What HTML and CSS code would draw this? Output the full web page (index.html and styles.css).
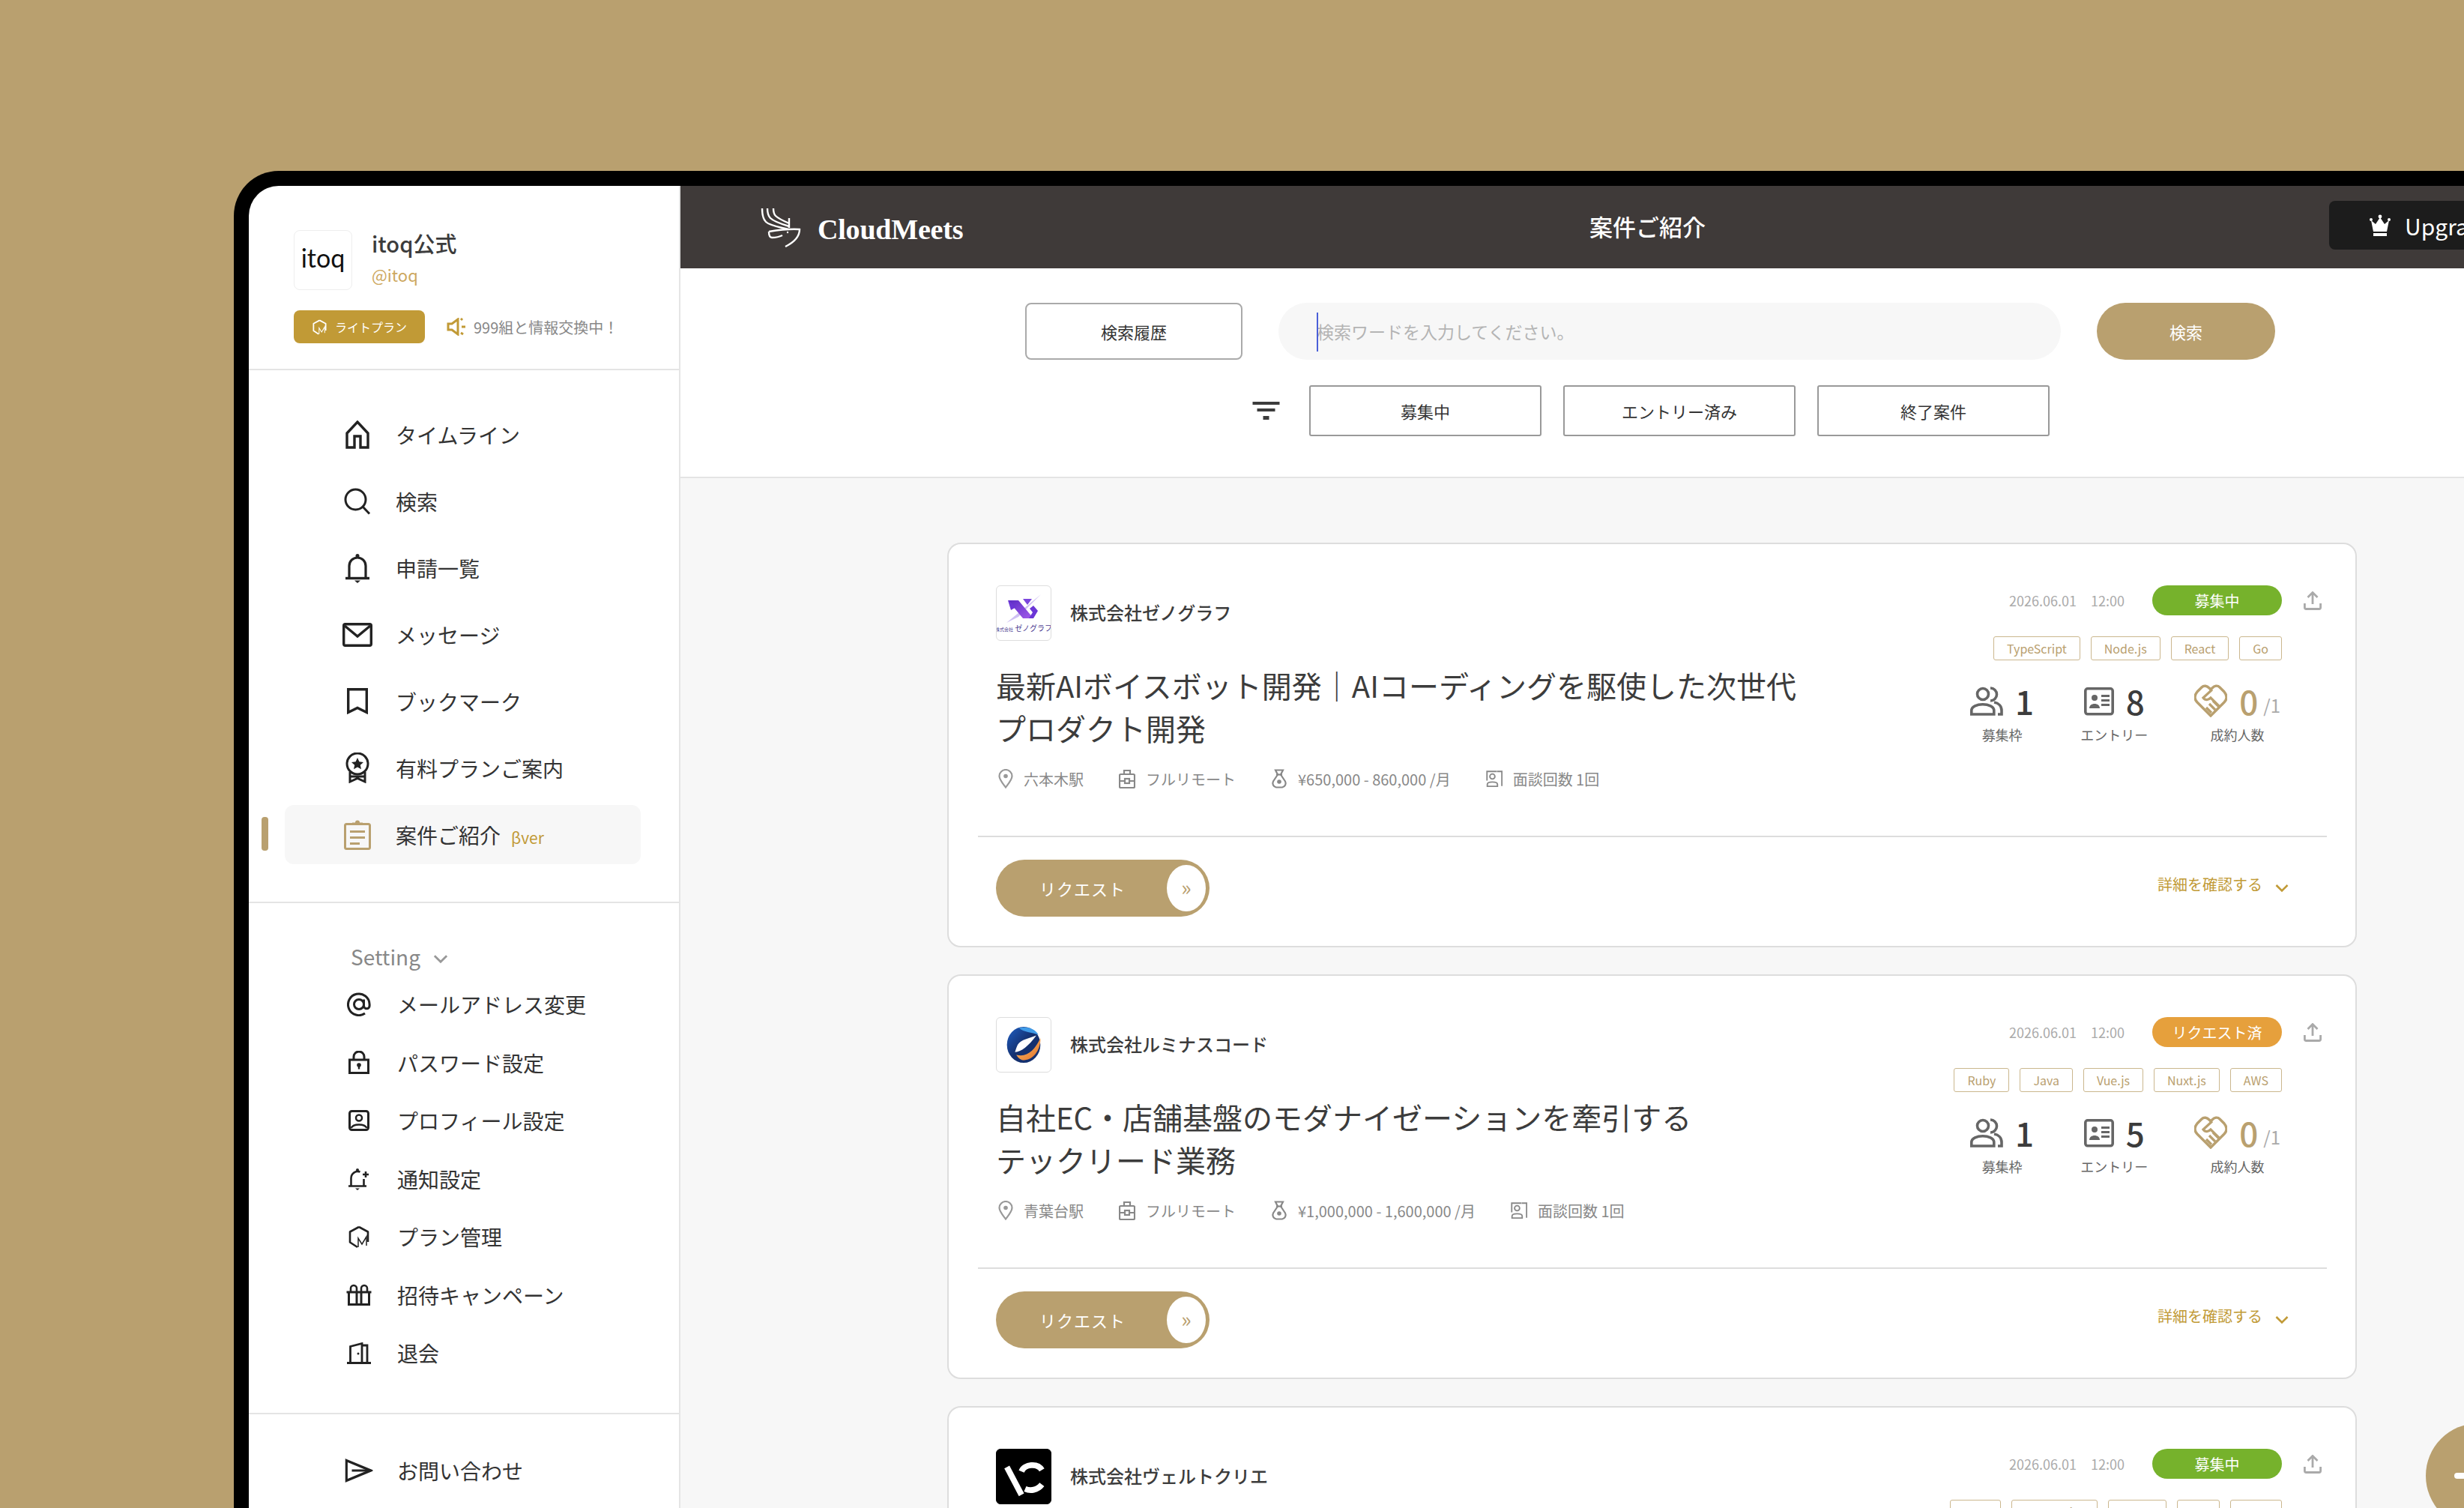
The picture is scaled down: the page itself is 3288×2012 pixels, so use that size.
FILE: index.html
```html
<!DOCTYPE html>
<html lang="ja">
<head>
<meta charset="utf-8">
<title>案件ご紹介 - CloudMeets</title>
<link rel="stylesheet" href="styles.css">
</head>
<body>
<svg class="sprite" aria-hidden="true">
  <symbol id="i-home" viewBox="0 0 32 38"><path d="M2 17 16 2l14 15v19H20V21h-8v15H2z" fill="none" stroke="currentColor" stroke-width="3.4"/></symbol>
  <symbol id="i-search" viewBox="0 0 36 36"><circle cx="15.5" cy="15.5" r="13.5" fill="none" stroke="currentColor" stroke-width="3"/><path d="m25 25 9 9.5" stroke="currentColor" stroke-width="3"/></symbol>
  <symbol id="i-bell" viewBox="0 0 32 40"><path d="M5 33V17a11 11 0 0 1 22 0v16" fill="none" stroke="currentColor" stroke-width="3.2"/><path d="M0 33.500h32" stroke="currentColor" stroke-width="3.400"/><circle cx="16" cy="3.500" r="2.500" fill="currentColor"/><path d="M12 36.500h8l-4 3.500z" fill="currentColor"/></symbol>
  <symbol id="i-mail" viewBox="0 0 40 32"><rect x="1.700" y="1.700" width="36.600" height="28.600" rx="2" fill="none" stroke="currentColor" stroke-width="3.400"/><path d="M3 4l17 14L37 4" fill="none" stroke="currentColor" stroke-width="3.400"/></symbol>
  <symbol id="i-bookmark" viewBox="0 0 28 35"><path d="M1.700 1.700h24.600v30.800L14 26.500 1.700 32.500z" fill="none" stroke="currentColor" stroke-width="3.400"/></symbol>
  <symbol id="i-medal" viewBox="0 0 33 41"><circle cx="16.500" cy="15" r="14" fill="none" stroke="currentColor" stroke-width="3"/><path d="m16.500 7 2.400 5.300 5.600.6-4.200 3.800 1.200 5.600-5-2.900-5 2.900 1.200-5.600-4.200-3.800 5.600-.6z" fill="currentColor"/><path d="M6.500 26v13l10-4.500 10 4.500V26M6.500 32h20" fill="none" stroke="currentColor" stroke-width="3"/></symbol>
  <symbol id="i-clip" viewBox="0 0 36 40"><rect x="1.500" y="5.500" width="33" height="33" rx="2" fill="none" stroke="currentColor" stroke-width="3"/><path d="M11 7V3.500h4a3 3 0 0 1 6 0h4V7z" fill="currentColor"/><path d="M8 14h20v3H8zM8 22h20v3H8zM8 30h13v3H8z" fill="currentColor"/></symbol>
  <symbol id="i-at" viewBox="0 0 32 32"><circle cx="16" cy="16" r="6.500" fill="none" stroke="currentColor" stroke-width="3"/><path d="M22.500 9.500V18a3.800 3.800 0 0 0 7.600 0v-2A14.300 14.300 0 1 0 24 28" fill="none" stroke="currentColor" stroke-width="3"/></symbol>
  <symbol id="i-lock" viewBox="0 0 28 31"><rect x="1.500" y="12" width="25" height="17.500" fill="none" stroke="currentColor" stroke-width="3"/><path d="M7 12V8a7 7 0 0 1 14 0v4" fill="none" stroke="currentColor" stroke-width="3"/><circle cx="14" cy="19" r="2.800" fill="currentColor"/><path d="M12.800 19h2.400v5.500h-2.400z" fill="currentColor"/></symbol>
  <symbol id="i-profile" viewBox="0 0 28 28"><rect x="1.500" y="1.500" width="25" height="25" rx="3" fill="none" stroke="currentColor" stroke-width="3"/><circle cx="14" cy="10.500" r="4" fill="none" stroke="currentColor" stroke-width="2.500"/><path d="M3.500 24c3-6 18-6 21 0" fill="none" stroke="currentColor" stroke-width="2.500"/></symbol>
  <symbol id="i-bellplus" viewBox="0 0 30 30"><path d="M4.500 24V14a9 9 0 0 1 12-8.500M21.500 15v9" fill="none" stroke="currentColor" stroke-width="2.600"/><path d="M1 24.500h24M24 5v8M20 9h8" stroke="currentColor" stroke-width="2.600"/><circle cx="13" cy="3" r="2" fill="currentColor"/><path d="M10 27.500h6l-3 2.500z" fill="currentColor"/></symbol>
  <symbol id="i-plan" viewBox="0 0 28 31"><path d="M14 2 2 8.500v14l10 6.500M14 2l12 6.500V22" fill="none" stroke="currentColor" stroke-width="2.600" stroke-linejoin="round"/><path d="M13 29V17l5 8 6-10v12" fill="none" stroke="currentColor" stroke-width="1.500"/></symbol>
  <symbol id="i-gift" viewBox="0 0 35 29"><path d="M4 11h27v16.500H4zM1 11h33M14.500 11v16M20.500 11v16" fill="none" stroke="currentColor" stroke-width="3"/><path d="M14.500 11V6a4 4 0 0 0-8 0v4M20.500 11V6a4 4 0 0 1 8 0v4" fill="none" stroke="currentColor" stroke-width="2.600"/></symbol>
  <symbol id="i-door" viewBox="0 0 32 29"><path d="M0 27.500h32M4.500 27V5.500L20 1.500V27M20 4h7v23" fill="none" stroke="currentColor" stroke-width="2.800"/><circle cx="15" cy="15" r="1.500" fill="currentColor"/></symbol>
  <symbol id="i-send" viewBox="0 0 37 32"><path d="M1.700 2.500 34 16 1.700 29.500z" fill="none" stroke="currentColor" stroke-width="3.400"/><path d="M9 16h25" stroke="currentColor" stroke-width="3"/></symbol>
  <symbol id="i-pin" viewBox="0 0 20 26"><path d="M10 24.500C5 18 1.500 14 1.500 9.500a8.500 8.500 0 0 1 17 0C18.500 14 15 18 10 24.500z" fill="none" stroke="currentColor" stroke-width="2.200"/><circle cx="10" cy="9.500" r="2.800" fill="currentColor"/></symbol>
  <symbol id="i-case" viewBox="0 0 22 26"><rect x="1" y="7" width="20" height="18" rx="1.500" fill="none" stroke="currentColor" stroke-width="2.200"/><path d="M7 7V2h8v5M1 16h20" fill="none" stroke="currentColor" stroke-width="2.200"/><rect x="8" y="13" width="6" height="6" fill="#fff" stroke="currentColor" stroke-width="2.200"/></symbol>
  <symbol id="i-bag" viewBox="0 0 22 26"><path d="M6 1.500h10l-3 6 6 9a5.500 5.500 0 0 1-4 8H7a5.500 5.500 0 0 1-4-8l6-9z" fill="none" stroke="currentColor" stroke-width="2.200"/><path d="M7 7.500h8" stroke="currentColor" stroke-width="2.200"/><circle cx="11" cy="17" r="2.800" fill="currentColor"/></symbol>
  <symbol id="i-talk" viewBox="0 0 26 26"><path d="M17 1.500h8v23M1.500 16V1.500h15" fill="none" stroke="currentColor" stroke-width="2.200"/><circle cx="10" cy="9.500" r="4" fill="none" stroke="currentColor" stroke-width="2.200"/><path d="M2 25v-3c0-5 16-5 16 0v3z" fill="none" stroke="currentColor" stroke-width="2.200"/></symbol>
  <symbol id="i-people" viewBox="0 0 44 40"><circle cx="17" cy="11" r="7.500" fill="none" stroke="currentColor" stroke-width="3.600"/><path d="M27 3a8.500 8.500 0 0 1 0 17" fill="none" stroke="currentColor" stroke-width="3.600"/><path d="M1.800 38v-5c0-11 30-11 30 0v5z" fill="none" stroke="currentColor" stroke-width="3.600"/><path d="M32 22c6 1 10 5 10 11v5h-5" fill="none" stroke="currentColor" stroke-width="3.600"/></symbol>
  <symbol id="i-card" viewBox="0 0 40 40"><rect x="1.800" y="3.800" width="36.400" height="34" rx="3" fill="none" stroke="currentColor" stroke-width="3.600"/><circle cx="14" cy="16" r="4" fill="currentColor"/><path d="M7 30c0-8 14-8 14 0z" fill="currentColor"/><path d="M23 12h11v3H23zM23 18h11v3H23zM23 24h11v3H23z" fill="currentColor"/></symbol>
  <symbol id="i-deal" viewBox="0 0 44 44"><path d="M22 42 4 24C0 20 0 15 4 10l6-6c3-3 7-2 10 1l2 2 2-2c3-3 7-4 10-1l6 6c4 5 4 10 0 14z" fill="none" stroke="currentColor" stroke-width="3.400"/><path d="M24 7 12 18c3 4 7 3 10 0l12 12M28 34l-8-8M23 38l-7-7M33 30l-8-8" fill="none" stroke="currentColor" stroke-width="3.200"/></symbol>
  <symbol id="i-upload" viewBox="0 0 24 25"><path d="M12 17V2M5.500 8 12 1.500 18.500 8" fill="none" stroke="currentColor" stroke-width="2.800"/><path d="M1.400 16v5.500a2 2 0 0 0 2 2h17.200a2 2 0 0 0 2-2V16" fill="none" stroke="currentColor" stroke-width="2.800"/></symbol>
  <symbol id="i-chev" viewBox="0 0 18 12"><path d="M1.500 2 9 9.500 16.500 2" fill="none" stroke="currentColor" stroke-width="2.600"/></symbol>
</svg>

<div class="device">
  <div class="screen">
    <aside class="sidebar">
      <section class="profile">
        <div class="profile-top">
          <div class="avatar"><span class="avatar-mark">itoq</span></div>
          <div class="profile-names">
            <div class="profile-name">itoq公式</div>
            <div class="profile-id">@itoq</div>
          </div>
        </div>
        <div class="profile-status">
          <div class="plan-badge"><svg class="plan-badge-icon"><use href="#i-plan"/></svg><span>ライトプラン</span></div>
          <svg class="mega" viewBox="0 0 26 24"><path d="M2 8h5l8-6v20l-8-6H2z" fill="none" stroke="#c19a36" stroke-width="3"/><path d="M19 3l2-2M20 12h5M19 20l3 2" stroke="#c19a36" stroke-width="3"/></svg>
          <span class="exchange">999組と情報交換中！</span>
        </div>
      </section>

      <nav class="nav main-nav">
        <a class="nav-item"><svg class="ni w32 h38"><use href="#i-home"/></svg><span>タイムライン</span></a>
        <a class="nav-item"><svg class="ni w36 h36"><use href="#i-search"/></svg><span>検索</span></a>
        <a class="nav-item"><svg class="ni w32 h40"><use href="#i-bell"/></svg><span>申請一覧</span></a>
        <a class="nav-item"><svg class="ni w40 h32"><use href="#i-mail"/></svg><span>メッセージ</span></a>
        <a class="nav-item"><svg class="ni w28 h35"><use href="#i-bookmark"/></svg><span>ブックマーク</span></a>
        <a class="nav-item"><svg class="ni w33 h41"><use href="#i-medal"/></svg><span>有料プランご案内</span></a>
        <a class="nav-item active"><svg class="ni w36 h40"><use href="#i-clip"/></svg><span>案件ご紹介</span><em class="beta">βver</em></a>
      </nav>

      <section class="nav setting-nav">
        <div class="setting-head"><span>Setting</span><svg class="setting-chev"><use href="#i-chev"/></svg></div>
        <a class="nav-item"><svg class="ni w32 h32"><use href="#i-at"/></svg><span>メールアドレス変更</span></a>
        <a class="nav-item"><svg class="ni w28 h31"><use href="#i-lock"/></svg><span>パスワード設定</span></a>
        <a class="nav-item"><svg class="ni w28 h28"><use href="#i-profile"/></svg><span>プロフィール設定</span></a>
        <a class="nav-item"><svg class="ni w30 h30"><use href="#i-bellplus"/></svg><span>通知設定</span></a>
        <a class="nav-item"><svg class="ni w28 h31"><use href="#i-plan"/></svg><span>プラン管理</span></a>
        <a class="nav-item"><svg class="ni w35 h29"><use href="#i-gift"/></svg><span>招待キャンペーン</span></a>
        <a class="nav-item"><svg class="ni w32 h29"><use href="#i-door"/></svg><span>退会</span></a>
      </section>

      <section class="nav contact-nav">
        <a class="nav-item"><svg class="ni w37 h32"><use href="#i-send"/></svg><span>お問い合わせ</span></a>
      </section>
    </aside>

    <main class="main">
      <header class="topbar">
        <div class="brand">
          <svg class="brand-mark" viewBox="0 0 55 54" fill="none" stroke="#fff" stroke-width="2.400"><path d="M2 2c0 9 1 14 5 18 5 5 18 7 30 10M9 2c0 7 1 10 4 13 5 5 15 8 25 11M17 2c0 5 1 8 3 10 4 4 11 7 18 10M38 15v13"/><path d="M11 33c12-2 27-4 41-3 0 8-5 16-19 23M11 33c0 5 1 8 4 8 5 0 10-1 14-3"/><circle cx="36" cy="34" r="1.200" fill="#fff" stroke="none"/></svg>
          <span class="brand-name">CloudMeets</span>
        </div>
        <h1 class="page-title">案件ご紹介</h1>
        <div class="upgrade">
          <svg class="crown" viewBox="0 0 28 30"><path d="M2 8l6 5 6-9 6 9 6-5-3 15H5z" fill="#fff"/><circle cx="14" cy="3" r="2.400" fill="#fff"/><circle cx="2" cy="7" r="2" fill="#fff"/><circle cx="26" cy="7" r="2" fill="#fff"/><path d="M5 25h18v4H5z" fill="#fff"/></svg>
          <span>Upgrade</span>
        </div>
      </header>

      <section class="search-panel">
        <div class="search-row">
          <button class="btn-history">検索履歴</button>
          <div class="search-input"><i class="caret"></i><span>検索ワードを入力してください。</span></div>
          <button class="btn-search">検索</button>
        </div>
        <div class="filter-row">
          <svg class="filter-icon" viewBox="0 0 36 24"><path d="M0 0h36v4H0zM6 9h24v4H6zM14 19h8v5h-8z" fill="#3c3c3c"/></svg>
          <button class="btn-filter">募集中</button>
          <button class="btn-filter">エントリー済み</button>
          <button class="btn-filter">終了案件</button>
        </div>
      </section>

      <section class="list">
        <article class="card">
          <div class="card-head">
            <div class="card-left">
              <div class="company">
                <div class="co-logo">
                  <svg class="zeno" viewBox="0 0 50 38"><defs><linearGradient id="zg" x1="0" y1="0" x2="1" y2="1"><stop offset="0" stop-color="#5a2bc4"/><stop offset="1" stop-color="#a45ceb"/></linearGradient></defs><path d="M2 38 48 0 18 30z" fill="#cfc0f3"/><path d="M4 8h14l20 24H24z" fill="url(#zg)"/><path d="M4 8l4 13 7-4zM38 32l6-10-6-7-5 4 4 5-5 8z" fill="#6b36d6"/><path d="M24 6h12l-6 8z" fill="#7b45dd"/></svg>
                  <span class="zeno-text"><small>株式会社</small> ゼノグラフ</span>
                </div>
                <span class="co-name">株式会社ゼノグラフ</span>
              </div>
              <h2 class="job-title">最新AIボイスボット開発｜AIコーディングを駆使した次世代<br>プロダクト開発</h2>
              <ul class="meta">
                <li><svg class="m-pin"><use href="#i-pin"/></svg>六本木駅</li>
                <li><svg class="m-ic"><use href="#i-case"/></svg>フルリモート</li>
                <li><svg class="m-ic"><use href="#i-bag"/></svg>¥650,000 - 860,000 /月</li>
                <li><svg class="m-ic"><use href="#i-talk"/></svg>面談回数 1回</li>
              </ul>
            </div>
            <div class="card-right">
              <div class="status-row">
                <time class="date">2026.06.01</time><time class="time">12:00</time>
                <span class="status open">募集中</span>
                <svg class="upload"><use href="#i-upload"/></svg>
              </div>
              <div class="tags"><span class="tag">TypeScript</span><span class="tag">Node.js</span><span class="tag">React</span><span class="tag">Go</span></div>
              <div class="stats">
                <div class="stat"><div class="stat-top"><svg class="st-ic"><use href="#i-people"/></svg><b>1</b></div><small>募集枠</small></div>
                <div class="stat"><div class="stat-top"><svg class="st-ic card-ic"><use href="#i-card"/></svg><b>8</b></div><small>エントリー</small></div>
                <div class="stat deal"><div class="stat-top"><svg class="st-ic"><use href="#i-deal"/></svg><b>0</b><span class="of">/1</span></div><small>成約人数</small></div>
              </div>
            </div>
          </div>
          <div class="card-foot">
            <button class="btn-request"><span>リクエスト</span><i class="go">»</i></button>
            <a class="more"><span>詳細を確認する</span><svg class="more-chev"><use href="#i-chev"/></svg></a>
          </div>
        </article>

        <article class="card">
          <div class="card-head">
            <div class="card-left">
              <div class="company">
                <div class="co-logo">
                  <svg class="lumina" viewBox="0 0 54 56"><defs><linearGradient id="lg" x1="0" y1="0" x2="1" y2="1"><stop offset="0" stop-color="#1f5fc4"/><stop offset=".5" stop-color="#14306f"/><stop offset="1" stop-color="#14306f"/></linearGradient><linearGradient id="lo" x1="0" y1="0" x2="1" y2="1"><stop offset="0" stop-color="#f9c06a"/><stop offset="1" stop-color="#e4722a"/></linearGradient></defs><ellipse cx="27" cy="28" rx="25" ry="27" fill="url(#lg)"/><path d="M52 18c1 14-8 32-24 33-5 0-9-3-12-8 16 4 27-6 36-25z" fill="url(#lo)"/><path d="M14 39c10-1 20-9 32-25-10 4-23 6-28 14-2 4-3 8-4 11z" fill="#fff"/><path d="M20 3c10-3 24 0 29 10-10-4-22-4-29-10z" fill="#3f9be8"/></svg>
                </div>
                <span class="co-name">株式会社ルミナスコード</span>
              </div>
              <h2 class="job-title">自社EC・店舗基盤のモダナイゼーションを牽引する<br>テックリード業務</h2>
              <ul class="meta">
                <li><svg class="m-pin"><use href="#i-pin"/></svg>青葉台駅</li>
                <li><svg class="m-ic"><use href="#i-case"/></svg>フルリモート</li>
                <li><svg class="m-ic"><use href="#i-bag"/></svg>¥1,000,000 - 1,600,000 /月</li>
                <li><svg class="m-ic"><use href="#i-talk"/></svg>面談回数 1回</li>
              </ul>
            </div>
            <div class="card-right">
              <div class="status-row">
                <time class="date">2026.06.01</time><time class="time">12:00</time>
                <span class="status requested">リクエスト済</span>
                <svg class="upload"><use href="#i-upload"/></svg>
              </div>
              <div class="tags"><span class="tag">Ruby</span><span class="tag">Java</span><span class="tag">Vue.js</span><span class="tag">Nuxt.js</span><span class="tag">AWS</span></div>
              <div class="stats">
                <div class="stat"><div class="stat-top"><svg class="st-ic"><use href="#i-people"/></svg><b>1</b></div><small>募集枠</small></div>
                <div class="stat"><div class="stat-top"><svg class="st-ic card-ic"><use href="#i-card"/></svg><b>5</b></div><small>エントリー</small></div>
                <div class="stat deal"><div class="stat-top"><svg class="st-ic"><use href="#i-deal"/></svg><b>0</b><span class="of">/1</span></div><small>成約人数</small></div>
              </div>
            </div>
          </div>
          <div class="card-foot">
            <button class="btn-request"><span>リクエスト</span><i class="go">»</i></button>
            <a class="more"><span>詳細を確認する</span><svg class="more-chev"><use href="#i-chev"/></svg></a>
          </div>
        </article>

        <article class="card">
          <div class="card-head">
            <div class="card-left">
              <div class="company">
                <div class="co-logo dark">
                  <svg class="vc" viewBox="0 0 74 74"><path d="M14 24l20 38" stroke="#fff" stroke-width="8" fill="none"/><path d="M34 30c4-10 22-12 28-2M62 48c-6 8-16 9-23 6" fill="none" stroke="#fff" stroke-width="8"/></svg>
                </div>
                <span class="co-name">株式会社ヴェルトクリエ</span>
              </div>
            </div>
            <div class="card-right">
              <div class="status-row">
                <time class="date">2026.06.01</time><time class="time">12:00</time>
                <span class="status open">募集中</span>
                <svg class="upload"><use href="#i-upload"/></svg>
              </div>
              <div class="tags"><span class="tag">PHP</span><span class="tag">TypeScript</span><span class="tag">React</span><span class="tag">Go</span><span class="tag">AWS</span></div>
            </div>
          </div>
        </article>
      </section>
    </main>
  </div>
</div>
<div class="fab"><i class="fab-bar"></i></div>
</body>
</html>
```
FILE: styles.css
```css
* { box-sizing: border-box; }
html, body { height: 100%; }
body {
  margin: 0;
  height: 2012px;
  overflow: hidden;
  position: relative;
  padding: 228px 0 0 312px;
  background: #b9a06f;
  color: #333;
  font-family: "Noto Sans CJK JP", "Noto Sans", sans-serif;
}
.sprite { position: absolute; width: 0; height: 0; overflow: hidden; }
h1, h2, ul { margin: 0; padding: 0; }
ul { list-style: none; }
button { font: inherit; color: inherit; background: none; border: 0; padding: 0; }
em, i { font-style: normal; }
svg { display: block; flex: none; }

.device {
  height: 1784px;
  width: 2976px;
  background: #000;
  padding: 20px 0 0 20px;
  border-top-left-radius: 60px;
}
.screen {
  display: flex;
  height: 1764px;
  width: 2956px;
  background: #fff;
  border-top-left-radius: 40px;
  overflow: hidden;
}

/* sidebar */
.sidebar { width: 576px; flex: none; border-right: 2px solid #e5e5e5; }
.profile { height: 246px; padding: 59px 0 0 60px; border-bottom: 2px solid #e4e4e4; }
.profile-top { display: flex; gap: 26px; }
.avatar {
  width: 78px; height: 80px; border: 1px solid #eee; border-radius: 8px;
  display: flex; align-items: center; justify-content: center;
}
.avatar-mark { font-family: Lato, sans-serif; font-size: 34px; line-height: 1; color: #111; transform: translateY(-3px); }
.profile-names { margin-top: -2px; }
.profile-name { font-size: 29px; line-height: 38px; font-weight: 500; color: #3c3c3c; }
.profile-id { font-size: 22px; line-height: 30px; margin-top: 8px; color: #cda860; }
.profile-status { display: flex; align-items: center; margin-top: 27px; }
.plan-badge {
  width: 175px; height: 44px; border-radius: 8px; background: #c19a36; color: #fff;
  display: flex; align-items: center; padding-left: 25px; gap: 11px;
  font-size: 16px;
}
.plan-badge-icon { width: 19px; height: 21px; }
.mega { width: 26px; height: 24px; margin-left: 29px; }
.exchange { margin-left: 10px; font-size: 20px; color: #888; }

.nav { padding: 0 0 0 48px; display: flex; flex-direction: column; }
.nav-item {
  position: relative;
  width: 475px; display: flex; align-items: center;
  padding-left: 77px;
  font-size: 28px;
  color: #333;
}
.ni { color: #222; margin-left: 0; }
.nav-item > .ni { position: absolute; left: 97px; transform: translateX(-50%); }
.nav-item > span { margin-left: 71px; }
.w28 { width: 28px; } .w30 { width: 30px; } .w32 { width: 32px; } .w33 { width: 33px; } .w35 { width: 35px; } .w36 { width: 36px; } .w37 { width: 37px; } .w40 { width: 40px; }
.h28 { height: 28px; } .h29 { height: 29px; } .h30 { height: 30px; } .h31 { height: 31px; } .h32 { height: 32px; } .h35 { height: 35px; } .h36 { height: 36px; } .h38 { height: 38px; } .h40 { height: 40px; } .h41 { height: 41px; }

.main-nav { padding-top: 46px; padding-bottom: 50px; gap: 10px; border-bottom: 2px solid #e4e4e4; }
.main-nav .nav-item { height: 79px; }
.nav-item.active { background: #f7f7f7; border-radius: 12px; }
.nav-item.active::before {
  content: ""; position: absolute; left: -31px; top: 16px; width: 9px; height: 45px; border-radius: 4px; background: #b9a06f;
}
.nav-item.active .ni { color: #b9a06f; }
.beta { margin-left: 14px; font-size: 21px; color: #c19a36; align-self: center; transform: translateY(3px); }

.setting-nav { padding-top: 51px; padding-bottom: 46px; gap: 10.5px; border-bottom: 2px solid #e4e4e4; }
.setting-nav .nav-item { height: 67px; }
.setting-nav .nav-item > .ni, .contact-nav .nav-item > .ni { left: 99px; }
.setting-nav .nav-item > span, .contact-nav .nav-item > span { margin-left: 73px; }
.setting-head { display: flex; align-items: center; height: 40px; padding-left: 88px; gap: 17px; font-size: 28px; color: #888; }
.setting-chev { width: 20px; height: 13px; color: #999; margin-top: 6px; }
.contact-nav { padding-top: 37px; }
.contact-nav .nav-item { height: 77px; }

/* main */
.main { flex: 1; min-width: 0; background: #f7f7f7; overflow: hidden; }
.topbar { display: flex; align-items: center; height: 110px; background: #3f3a39; padding-left: 107px; width: 2380px; }
.brand { display: flex; align-items: center; gap: 21px; width: 270px; flex: none; }
.brand-mark { width: 55px; height: 54px; }
.brand-name { font-family: "Liberation Serif", serif; font-weight: 700; font-size: 38px; color: #fff; transform: translateY(3px); letter-spacing: -.2px; }
.page-title { margin-left: 836px; width: 155px; flex: none; font-size: 31px; font-weight: 500; color: #fff; white-space: nowrap; transform: translateY(-2px); }
.upgrade {
  margin-left: 832px; margin-top: -5px; flex: none; width: 260px; height: 65px; border-radius: 8px; background: #1c1c1c;
  display: flex; align-items: center; gap: 19px; padding-left: 54px; font-size: 30px; color: #fff;
}
.crown { width: 28px; height: 30px; }

.search-panel { background: #fff; height: 280px; padding-top: 46px; border-bottom: 2px solid #e4e4e4; }
.search-row { display: flex; align-items: center; gap: 48px; padding-left: 460px; }
.btn-history { width: 290px; height: 76px; border: 2px solid #aaa; border-radius: 8px; font-size: 22px; color: #333; background: #fff; }
.search-input {
  width: 1044px; height: 76px; border-radius: 38px; background: #f7f7f7;
  display: flex; align-items: center; padding-left: 51px; position: relative;
  font-size: 23px; color: #b4b4b4;
}
.caret { position: absolute; left: 51px; top: 13px; width: 2px; height: 52px; background: #4a5fd8; }
.btn-search { width: 238px; height: 76px; border-radius: 38px; background: #b9a06f; color: #fff; font-size: 22px; }
.filter-row { display: flex; align-items: center; padding-left: 763px; margin-top: 34px; gap: 29px; }
.filter-icon { width: 37px; height: 24px; margin-right: 10px; margin-top: 0; }
.btn-filter { width: 310px; height: 68px; border: 2px solid #999; border-radius: 3px; font-size: 22px; color: #333; background: #fff; }

.list { padding: 86px 0 0 356px; display: flex; flex-direction: column; gap: 36px; }
.card { width: 1881px; height: 540px; flex: none; background: #fff; border: 2px solid #ddd; border-radius: 18px; }
.card-head { display: flex; justify-content: space-between; height: 391px; position: relative; }
.card-head::after { content: ""; position: absolute; left: 39px; right: 38px; bottom: 0; height: 2px; background: #ddd; }
.card-left { padding: 55px 0 0 63px; }
.company { display: flex; align-items: center; gap: 25px; }
.co-logo {
  width: 74px; height: 74px; border: 1px solid #ddd; border-radius: 6px; background: #fff;
  display: flex; flex-direction: column; align-items: center; justify-content: center; overflow: hidden;
}
.co-logo.dark { background: #000; border-color: #000; }
.zeno { width: 50px; height: 38px; margin-top: 4px; }
.zeno-text { font-size: 10px; line-height: 14px; color: #4a3a90; white-space: nowrap; }
.zeno-text small { font-size: 6px; }
.lumina { width: 50px; height: 50px; }
.vc { width: 72px; height: 72px; }
.co-name { font-size: 24px; font-weight: 500; color: #3c3c3c; margin-top: -3px; }
.job-title { margin-top: 31px; font-size: 40px; line-height: 57px; font-weight: 400; color: #3c3c3c; white-space: nowrap; }
.meta { display: flex; align-items: center; gap: 47px; margin-top: 24px; height: 30px; font-size: 20px; color: #888; }
.meta li { display: flex; align-items: center; gap: 14px; }
.m-pin { width: 20px; height: 26px; margin-left: 3px; color: #999; }
.m-ic { width: 22px; height: 26px; color: #888; }

.card-right { padding: 55px 45px 0 0; display: flex; flex-direction: column; align-items: flex-end; }
.status-row { display: flex; align-items: center; height: 40px; font-size: 18px; color: #aaa; }
.time { margin-left: 19px; }
.status { width: 173px; height: 40px; border-radius: 20px; margin-left: 37px; color: #fff; font-size: 20px; display: flex; align-items: center; justify-content: center; }
.status.open { background: #76b22c; }
.status.requested { background: #e6a03c; }
.upload { width: 24px; height: 25px; margin-left: 29px; color: #aaa; }
.tags { display: flex; gap: 14px; margin: 28px 53px 0 0; }
.tag { height: 32px; padding: 0 17px; border: 1px solid #cbb78e; border-radius: 3px; font-size: 16px; line-height: 30px; color: #b9a06f; white-space: nowrap; }
.stats { display: flex; gap: 62px; margin: 26px 55px 0 0; }
.stat { display: flex; flex-direction: column; align-items: center; }
.stat-top { display: flex; align-items: center; height: 56px; }
.st-ic { width: 44px; height: 40px; color: #666; }
.card-ic { width: 40px; }
.stat b { margin-left: 16px; font-size: 44px; font-weight: 500; color: #3c3c3c; line-height: 56px; }
.stat small { margin-top: 5px; font-size: 18px; line-height: 24px; color: #666; }
.deal .st-ic { color: #b9a06f; height: 44px; }
.deal b { color: #b9a06f; }
.of { margin: 10px 0 0 7px; font-size: 24px; color: #aaa; }

.card-foot { display: flex; justify-content: space-between; padding: 30px 0 0 63px; }
.btn-request {
  position: relative; width: 285px; height: 76px; border-radius: 38px; background: #b9a06f; color: #fff;
  font-size: 22px; letter-spacing: 1px; text-align: left; padding-left: 58px;
}
.go {
  position: absolute; right: 5px; top: 7px; width: 52px; height: 62px; border-radius: 50%; background: #fff; color: #b9a06f;
  display: flex; align-items: center; justify-content: center; font-size: 28px; letter-spacing: 0; padding-bottom: 4px;
}
.more { display: flex; align-items: center; gap: 17px; margin: -6px 89px 0 0; height: 76px; font-size: 20px; color: #c19a36; }
.more-chev { width: 18px; height: 12px; margin-top: 12px; }

.fab { position: absolute; left: 3237px; top: 1899px; width: 140px; height: 140px; border-radius: 50%; background: #b9a06f; }
.fab-bar { position: absolute; left: 38px; top: 66px; width: 40px; height: 8px; border-radius: 4px; background: #fff; }
```
